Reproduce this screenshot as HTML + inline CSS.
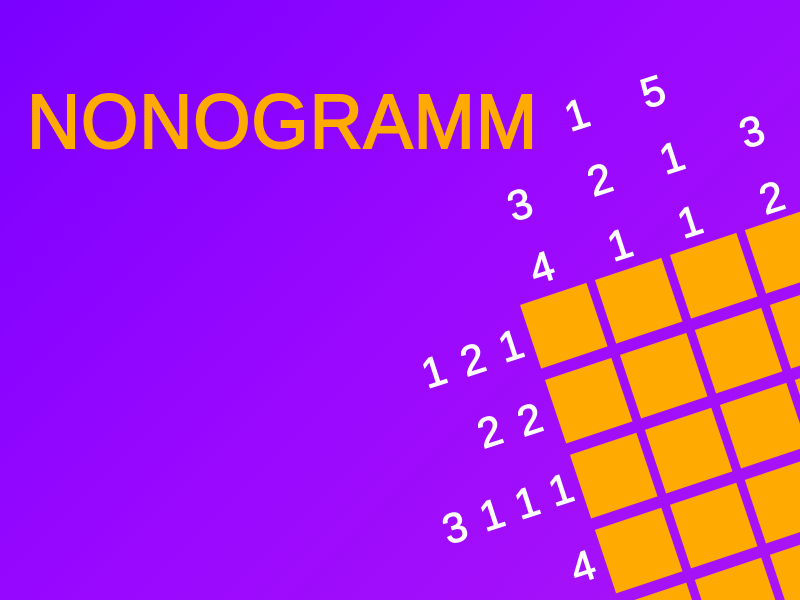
<!DOCTYPE html>
<html><head><style>
html,body{margin:0;padding:0;width:800px;height:600px;overflow:hidden;}
body{position:relative;background:linear-gradient(135deg,#7a00ff 0%,#9a08ff 50%,#a914f6 100%);font-family:"Liberation Sans",sans-serif;}
#wrap{position:absolute;left:0;top:0;width:800px;height:600px;overflow:hidden;}
h1{position:absolute;left:27px;top:78px;margin:0;font-size:77px;font-weight:normal;color:#ffaa00;letter-spacing:1px;transform-origin:0 0;transform:scaleX(0.955);white-space:nowrap;-webkit-text-stroke:2px #ffaa00;}
.grid{position:absolute;left:520px;top:305px;transform-origin:0 0;transform:rotate(-18.43deg);}
.c{position:absolute;width:70px;height:67px;background:#ffaa00;}
.n{position:absolute;color:#fff;font-size:42px;width:40px;height:46px;line-height:46px;text-align:center;margin-left:-20px;margin-top:-23px;transform:rotate(-18deg);-webkit-text-stroke:1px #fff;}
</style></head><body>
<div id="wrap">
<h1>NONOGRAMM</h1>
<div class="grid" id="g"></div>
<div class="n" style="left:577px;top:115px">1</div>
<div class="n" style="left:653px;top:92px">5</div>
<div class="n" style="left:520px;top:205px">3</div>
<div class="n" style="left:600px;top:180px">2</div>
<div class="n" style="left:672px;top:158px">1</div>
<div class="n" style="left:752px;top:132px">3</div>
<div class="n" style="left:542px;top:268px">4</div>
<div class="n" style="left:620px;top:245px">1</div>
<div class="n" style="left:690px;top:222px">1</div>
<div class="n" style="left:772px;top:198px">2</div>
<div class="n" style="left:434px;top:372px">1</div>
<div class="n" style="left:473px;top:360px">2</div>
<div class="n" style="left:511px;top:346px">1</div>
<div class="n" style="left:490px;top:432px">2</div>
<div class="n" style="left:530px;top:420px">2</div>
<div class="n" style="left:455px;top:528px">3</div>
<div class="n" style="left:492px;top:515px">1</div>
<div class="n" style="left:527px;top:503px">1</div>
<div class="n" style="left:561px;top:490px">1</div>
<div class="n" style="left:583px;top:567px">4</div>
</div>
<script>
var g=document.getElementById('g'),h='';
for(var r=0;r<5;r++)for(var c=0;c<5;c++)h+='<div class="c" style="left:'+(c*79)+'px;top:'+(r*79)+'px"></div>';
g.innerHTML=h;
</script>
</body></html>
